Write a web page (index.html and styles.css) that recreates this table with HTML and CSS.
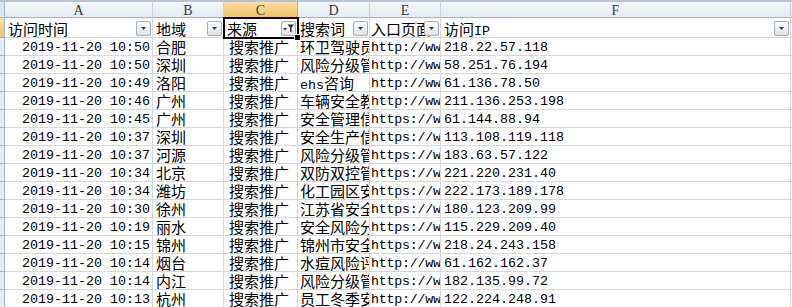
FILE: index.html
```html
<!DOCTYPE html>
<html>
<head>
<meta charset="utf-8">
<link rel="stylesheet" href="styles.css">
</head>
<body>
<div class="sheet">
  <div class="corner"></div>
  <div class="ch">A</div>
  <div class="ch">B</div>
  <div class="ch sel">C</div>
  <div class="ch">D</div>
  <div class="ch">E</div>
  <div class="ch">F</div>
  <div class="ch rest"></div>

  <div class="rh selrow"></div>
  <div class="c h">访问时间<span class="fb"><svg width="15" height="15" viewBox="0 0 15 15"><path d="M5 6h5l-2.5 3z" fill="#3c3c3c"/></svg></span></div>
  <div class="c h">地域<span class="fb"><svg width="15" height="15" viewBox="0 0 15 15"><path d="M5 6h5l-2.5 3z" fill="#3c3c3c"/></svg></span></div>
  <div class="c h active">来源<span class="fb"><svg width="15" height="15" viewBox="0 0 15 15"><path d="M2 7h4l-2 2.5z" fill="#3c3c3c"/><path d="M6.5 3.5h6.5l-2.5 3v5l-1.5-1v-4z" fill="#2c2c2c"/></svg></span><span class="handle"></span></div>
  <div class="c h d">搜索词<span class="fb"><svg width="15" height="15" viewBox="0 0 15 15"><path d="M5 6h5l-2.5 3z" fill="#3c3c3c"/></svg></span></div>
  <div class="c h e">入口页面<span class="fb"><svg width="15" height="15" viewBox="0 0 15 15"><path d="M5 6h5l-2.5 3z" fill="#3c3c3c"/></svg></span></div>
  <div class="c h">访问<span class="m">IP</span><span class="fb"><svg width="15" height="15" viewBox="0 0 15 15"><path d="M5 6h5l-2.5 3z" fill="#3c3c3c"/></svg></span></div>
  <div class="c blank"></div>

  <div class="rh"></div><div class="c r m">2019-11-20 10:50</div><div class="c">合肥</div><div class="c s">搜索推广</div><div class="c d">环卫驾驶员</div><div class="c e m">http://ww</div><div class="c m">218.22.57.118</div><div class="c blank"></div>
  <div class="rh"></div><div class="c r m">2019-11-20 10:50</div><div class="c">深圳</div><div class="c s">搜索推广</div><div class="c d">风险分级管</div><div class="c e m">http://ww</div><div class="c m">58.251.76.194</div><div class="c blank"></div>
  <div class="rh"></div><div class="c r m">2019-11-20 10:49</div><div class="c">洛阳</div><div class="c s">搜索推广</div><div class="c d"><span class="m">ehs</span>咨询</div><div class="c e m">http://ww</div><div class="c m">61.136.78.50</div><div class="c blank"></div>
  <div class="rh"></div><div class="c r m">2019-11-20 10:46</div><div class="c">广州</div><div class="c s">搜索推广</div><div class="c d">车辆安全教</div><div class="c e m">http://ww</div><div class="c m">211.136.253.198</div><div class="c blank"></div>
  <div class="rh"></div><div class="c r m">2019-11-20 10:45</div><div class="c">广州</div><div class="c s">搜索推广</div><div class="c d">安全管理信</div><div class="c e m">https://w</div><div class="c m">61.144.88.94</div><div class="c blank"></div>
  <div class="rh"></div><div class="c r m">2019-11-20 10:37</div><div class="c">深圳</div><div class="c s">搜索推广</div><div class="c d">安全生产信</div><div class="c e m">https://w</div><div class="c m">113.108.119.118</div><div class="c blank"></div>
  <div class="rh"></div><div class="c r m">2019-11-20 10:37</div><div class="c">河源</div><div class="c s">搜索推广</div><div class="c d">风险分级管</div><div class="c e m">https://w</div><div class="c m">183.63.57.122</div><div class="c blank"></div>
  <div class="rh"></div><div class="c r m">2019-11-20 10:34</div><div class="c">北京</div><div class="c s">搜索推广</div><div class="c d">双防双控管</div><div class="c e m">https://w</div><div class="c m">221.220.231.40</div><div class="c blank"></div>
  <div class="rh"></div><div class="c r m">2019-11-20 10:34</div><div class="c">潍坊</div><div class="c s">搜索推广</div><div class="c d">化工园区安</div><div class="c e m">https://w</div><div class="c m">222.173.189.178</div><div class="c blank"></div>
  <div class="rh"></div><div class="c r m">2019-11-20 10:30</div><div class="c">徐州</div><div class="c s">搜索推广</div><div class="c d">江苏省安全</div><div class="c e m">https://w</div><div class="c m">180.123.209.99</div><div class="c blank"></div>
  <div class="rh"></div><div class="c r m">2019-11-20 10:19</div><div class="c">丽水</div><div class="c s">搜索推广</div><div class="c d">安全风险分</div><div class="c e m">https://w</div><div class="c m">115.229.209.40</div><div class="c blank"></div>
  <div class="rh"></div><div class="c r m">2019-11-20 10:15</div><div class="c">锦州</div><div class="c s">搜索推广</div><div class="c d">锦州市安全</div><div class="c e m">https://w</div><div class="c m">218.24.243.158</div><div class="c blank"></div>
  <div class="rh"></div><div class="c r m">2019-11-20 10:14</div><div class="c">烟台</div><div class="c s">搜索推广</div><div class="c d">水痘风险评</div><div class="c e m">http://ww</div><div class="c m">61.162.162.37</div><div class="c blank"></div>
  <div class="rh"></div><div class="c r m">2019-11-20 10:14</div><div class="c">内江</div><div class="c s">搜索推广</div><div class="c d">风险分级管</div><div class="c e m">https://w</div><div class="c m">182.135.99.72</div><div class="c blank"></div>
  <div class="rh"></div><div class="c r m">2019-11-20 10:13</div><div class="c">杭州</div><div class="c s">搜索推广</div><div class="c d">员工冬季安</div><div class="c e m">http://ww</div><div class="c m">122.224.248.91</div><div class="c blank"></div>
</div>
</body>
</html>
```

FILE: styles.css
```css
html, body {
  margin: 0;
  padding: 0;
  background: #ffffff;
  overflow: hidden;
}

.sheet {
  display: grid;
  grid-template-columns: 5px 148px 71px 74px 72px 71px 350px 1fr;
  grid-template-rows: 18px 20px;
  grid-auto-rows: 18px;
  width: 792px;
  font-family: "Noto Sans CJK SC", sans-serif;
  font-size: 15px;
  color: #000;
}

.corner {
  background: #dfe6ef;
  border-top: 2px solid #b9c5d4;
  border-right: 1px solid #9eb6ce;
  border-bottom: 1px solid #9eb6ce;
  box-sizing: border-box;
}

.ch {
  box-sizing: border-box;
  border-top: 2px solid #b9c5d4;
  border-right: 1px solid #c5d2e0;
  border-bottom: 1px solid #9eb6ce;
  background: linear-gradient(#f4f7fb, #e3eaf3);
  font-family: "Liberation Serif", serif;
  font-size: 14px;
  color: #3c3c3c;
  text-align: center;
  line-height: 17px;
}

.ch.sel {
  background: linear-gradient(#fbdca4, #f3c467);
  border-right-color: #e3a440;
  border-bottom-color: #e3a440;
}

.ch.rest {
  border-right: none;
}

.rh {
  box-sizing: border-box;
  background: #e4ecf7;
  border-right: 1px solid #9eb6ce;
  border-bottom: 1px solid #9eb6ce;
}

.rh.selrow {
  background: linear-gradient(#fbdca4, #f3c467);
  border-bottom-color: #e3a440;
}

.c {
  position: relative;
  box-sizing: border-box;
  border-right: 1px solid #d0d7e5;
  border-bottom: 1px solid #d0d7e5;
  padding: 1px 2px 0 3px;
  white-space: nowrap;
  overflow-x: clip;
  overflow-y: visible;
  line-height: 16px;
}

.c.m {
  padding-top: 2px;
}

.c.h {
  line-height: 19px;
  padding-top: 1px;
  overflow: visible;
}

.c.h.active {
  outline: 2px solid #000;
  outline-offset: -1px;
  z-index: 2;
}

.c.r {
  text-align: right;
}

.c.s {
  padding-left: 5px;
}

.c.d {
  padding-left: 2px;
  padding-right: 0;
}

.c.e {
  padding-left: 1px;
  padding-right: 0;
  letter-spacing: -0.25px;
}

.c.h.e {
  overflow-x: clip;
  overflow-y: visible;
  letter-spacing: 0;
}

.c.blank {
  border-right: none;
}

.m {
  font-family: "Liberation Mono", monospace;
  font-size: 13.33px;
}

.fb {
  position: absolute;
  right: 1px;
  top: 3px;
  width: 15px;
  height: 15px;
  box-sizing: border-box;
  border: 1px solid #a6acb4;
  border-radius: 2px;
  background: linear-gradient(#ffffff, #dde1e6);
  display: flex;
  align-items: center;
  justify-content: center;
}

.fb svg {
  display: block;
  flex: none;
}

.handle {
  position: absolute;
  right: -4px;
  bottom: -4px;
  width: 5px;
  height: 5px;
  background: #000;
  border: 1px solid #fff;
  z-index: 3;
}
```
